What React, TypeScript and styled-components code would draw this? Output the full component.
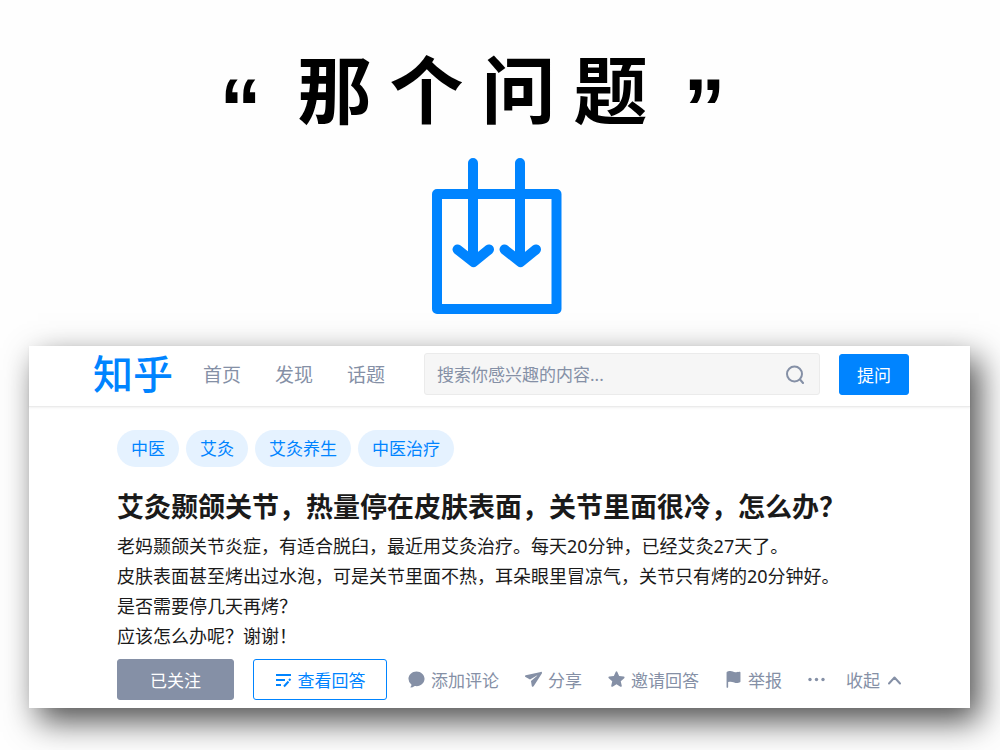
import React from 'react';
import styled, { createGlobalStyle } from 'styled-components';

const GlobalStyle = createGlobalStyle`
  *, *::before, *::after { box-sizing: border-box; }
  body {
    margin: 0;
    background: #fefefe;
    color: #1a1a1a;
    font-family: "Noto Sans", "Noto Sans CJK SC", sans-serif;
  }
  button, input { font-family: inherit; }
  h1, h2, p { margin: 0; }
`;

const Page = styled.main`
  display: flex;
  flex-direction: column;
  padding: 40px 30px 42px 29px;
`;

const Banner = styled.h1`
  display: flex;
  justify-content: center;
  gap: 18px;
  padding-right: 54px;
  color: #000;
  font-size: 74px;
  font-weight: 700;
  line-height: 100px;
`;

const Mark = styled.span`
  margin: 0 18px;
  padding-top: 18px;
  font-family: "Liberation Sans", sans-serif;
  font-size: 84px;
  font-weight: 700;
`;

const ArrowArt = styled.svg`
  align-self: center;
  width: 130px;
  height: 156px;
  margin: 0 6px 32px 0;
`;

const Card = styled.section`
  background: #fff;
  box-shadow: 9px 13px 31px rgba(0, 0, 0, 0.7);
`;

const TopBar = styled.header`
  display: flex;
  align-items: center;
  height: 61px;
  padding: 0 61px 4px 64px;
  border-bottom: 1px solid #ebebeb;
  box-shadow: 0 1px 2px rgba(0, 0, 0, 0.06);
`;

const Logo = styled.a`
  margin-right: 30px;
  color: #0084ff;
  font-size: 40px;
  font-weight: 500;
  line-height: 52px;
  text-decoration: none;
`;

const Nav = styled.nav`
  display: flex;
  gap: 34px;
  margin-right: 39px;
`;

const NavLink = styled.a`
  color: #8590a6;
  font-size: 19px;
  text-decoration: none;
  white-space: nowrap;
`;

const SearchBox = styled.label`
  display: flex;
  flex: 1;
  align-items: center;
  min-width: 0;
  height: 42px;
  margin-right: 19px;
  padding: 0 14px 0 12px;
  border: 1px solid #ebebeb;
  border-radius: 3px;
  background: #f6f6f6;
  color: #8590a6;
`;

const SearchInput = styled.input`
  flex: 1;
  min-width: 0;
  padding: 0;
  border: 0;
  outline: 0;
  background: transparent;
  color: #1a1a1a;
  font-size: 17px;
  &::placeholder { color: #8590a6; opacity: 1; }
`;

const Button = styled.button<{ $kind: 'primary' | 'muted' | 'outline'; $width: number }>`
  display: flex;
  flex: none;
  align-items: center;
  justify-content: center;
  gap: 6px;
  width: ${(p) => p.$width}px;
  height: 41px;
  padding: 0;
  border: 1px solid ${(p) => (p.$kind === 'muted' ? '#8590a6' : '#0084ff')};
  border-radius: 3px;
  background: ${(p) => ({ primary: '#0084ff', muted: '#8590a6', outline: '#fff' })[p.$kind]};
  color: ${(p) => (p.$kind === 'outline' ? '#0084ff' : '#fff')};
  font-size: 17px;
  white-space: nowrap;
`;

const Question = styled.article`
  padding: 23px 60px 8px 88px;
`;

const Tags = styled.div`
  display: flex;
  gap: 7px;
  margin-bottom: 20px;
`;

const Tag = styled.a`
  padding: 0 14px;
  border-radius: 19px;
  background: #e5f2ff;
  color: #0084ff;
  font-size: 17px;
  line-height: 37px;
  text-decoration: none;
`;

const Title = styled.h2`
  margin-bottom: 4px;
  font-size: 27px;
  font-weight: 700;
  line-height: 40px;
`;

const Line = styled.p`
  font-size: 18px;
  line-height: 30px;
`;

const Actions = styled.footer`
  display: flex;
  align-items: center;
  gap: 19px;
  margin-top: 8px;
`;

const Links = styled.div<{ $gap: number }>`
  display: flex;
  align-items: center;
  gap: ${(p) => p.$gap}px;
  padding-left: 2px;
`;

const MoreLinks = styled(Links)`
  padding-left: 0;
`;

const Action = styled.button`
  display: flex;
  align-items: center;
  gap: 6px;
  padding: 0;
  border: 0;
  background: transparent;
  color: #8590a6;
  font-size: 17px;
  white-space: nowrap;
`;

const Icon = styled.svg`
  flex: none;
  width: 17px;
  height: 17px;
`;

const SearchIcon = styled.svg`
  flex: none;
  width: 20px;
  height: 20px;
`;

const tags = ['中医', '艾灸', '艾灸养生', '中医治疗'];

const lines = [
  '老妈颞颌关节炎症，有适合脱臼，最近用艾灸治疗。每天20分钟，已经艾灸27天了。',
  '皮肤表面甚至烤出过水泡，可是关节里面不热，耳朵眼里冒凉气，关节只有烤的20分钟好。',
  '是否需要停几天再烤？',
  '应该怎么办呢？谢谢！',
];

const actions = [
  {
    label: '添加评论',
    box: '2.5 2.5 19 19',
    d: 'M10.241 19.313a.97.97 0 0 0-.77.2 7.908 7.908 0 0 1-3.772 1.482.409.409 0 0 1-.38-.637 5.825 5.825 0 0 0 1.11-2.237.605.605 0 0 0-.227-.59A7.935 7.935 0 0 1 3 11.25C3 6.7 7.03 3 12 3s9 3.7 9 8.25-4.373 9.108-10.759 8.063z',
  },
  {
    label: '分享',
    box: '2 3 20 20',
    d: 'M2.931 7.89c-1.067.24-1.275 1.669-.318 2.207l5.277 2.908 8.168-4.776c.25-.127.477.198.273.39L9.05 14.66l.927 5.953c.18 1.084 1.593 1.376 2.182.456l9.644-15.242c.584-.892-.212-2.029-1.234-1.796L2.93 7.89z',
  },
  {
    label: '邀请回答',
    box: '2 2 20 20',
    d: 'M11 3.1c.4-.9 1.6-.9 2 0l2.1 4.9 5.4.5c1 .1 1.4 1.2.6 1.9L17 14l1.200 5.300c.2 1-.8 1.700-1.600 1.200L12 17.700l-4.600 2.800c-.8.5-1.800-.2-1.600-1.200L7 14l-4.100-3.600c-.8-.7-.4-1.800.6-1.900L8.900 8z',
  },
  {
    label: '举报',
    box: '-2 0 22 22',
    d: 'M16.947 1.13c-.633.135-3.927.638-5.697.384-3.133-.45-4.776-2.54-9.949-.888-.997.413-1.277 1.038-1.277 2.019L.003 20.808c0 .3.101.54.304.718a.97.97 0 0 0 .73.304c.275 0 .519-.102.73-.304.202-.179.304-.418.304-.718v-6.58c4.533-1.235 8.047.668 8.562.864 2.343.893 5.542.008 6.774-.657.397-.178.596-.474.596-.887V1.964c0-.599-.42-.972-1.057-.835z',
  },
];

export default function App() {
  return (
    <>
      <GlobalStyle />
      <Page>
        <Banner>
          <Mark>“</Mark>
          <span>那</span>
          <span>个</span>
          <span>问</span>
          <span>题</span>
          <Mark>”</Mark>
        </Banner>
        <ArrowArt viewBox="0 0 130 156" fill="none" stroke="#0084ff" strokeWidth="10" strokeLinecap="round" strokeLinejoin="round" aria-hidden="true">
          <path d="M5 36h119.500v115H5z" />
          <path d="M41 5v96M25.500 91.500 41.500 104l15.500-12.500M88 5v96M72.500 91.500 88.500 104l15.500-12.500" />
        </ArrowArt>
        <Card>
          <TopBar>
            <Logo href="#">知乎</Logo>
            <Nav>
              <NavLink href="#">首页</NavLink>
              <NavLink href="#">发现</NavLink>
              <NavLink href="#">话题</NavLink>
            </Nav>
            <SearchBox>
              <SearchInput type="text" placeholder="搜索你感兴趣的内容..." aria-label="搜索" />
              <SearchIcon viewBox="0 0 20 20" fill="none" stroke="currentColor" strokeWidth="2" strokeLinecap="round" aria-hidden="true">
                <circle cx="9.500" cy="10" r="7.500" />
                <path d="m15.500 16 2.500 3" />
              </SearchIcon>
            </SearchBox>
            <Button type="button" $kind="primary" $width={70}>提问</Button>
          </TopBar>
          <Question>
            <Tags>
              {tags.map((tag) => (
                <Tag href="#" key={tag}>{tag}</Tag>
              ))}
            </Tags>
            <Title>艾灸颞颌关节，热量停在皮肤表面，关节里面很冷，怎么办？</Title>
            {lines.map((line) => (
              <Line key={line}>{line}</Line>
            ))}
            <Actions>
              <Button type="button" $kind="muted" $width={117}>已关注</Button>
              <Button type="button" $kind="outline" $width={134}>
                <Icon viewBox="0 0 17 17" fill="none" stroke="currentColor" strokeWidth="2" aria-hidden="true">
                  <path d="M1 4h15M1 9h9M1 14h5M9 15.500l4.500-5M14 9.500l1.500-1.500" />
                </Icon>
                查看回答
              </Button>
              <Links $gap={26}>
                {actions.map((action) => (
                  <Action type="button" key={action.label}>
                    <Icon viewBox={action.box} fill="currentColor" aria-hidden="true">
                      <path d={action.d} />
                    </Icon>
                    {action.label}
                  </Action>
                ))}
                <MoreLinks $gap={21}>
                  <Action type="button" aria-label="更多">
                    <Icon viewBox="0 0 17 17" fill="currentColor" aria-hidden="true">
                      <circle cx="2" cy="8.500" r="1.700" />
                      <circle cx="8.500" cy="8.500" r="1.700" />
                      <circle cx="15" cy="8.500" r="1.700" />
                    </Icon>
                  </Action>
                  <Action type="button">
                    收起
                    <Icon viewBox="0 0 17 17" fill="none" stroke="currentColor" strokeWidth="2" strokeLinecap="round" strokeLinejoin="round" aria-hidden="true">
                      <path d="m3 12.500 5.500-6 5.500 6" />
                    </Icon>
                  </Action>
                </MoreLinks>
              </Links>
            </Actions>
          </Question>
        </Card>
      </Page>
    </>
  );
}
